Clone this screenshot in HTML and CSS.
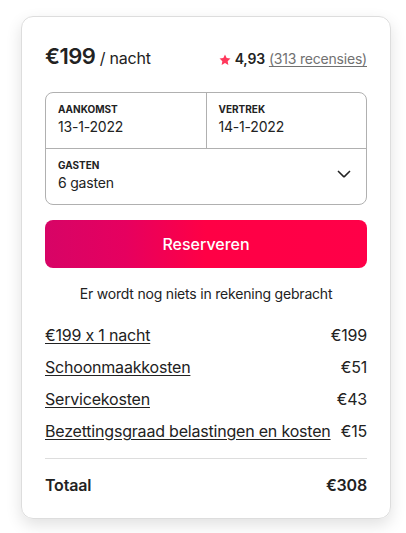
FILE: index.html
```html
<!DOCTYPE html>
<html lang="nl">
<head>
<meta charset="utf-8">
<link rel="stylesheet" href="styles.css">
</head>
<body>
<div class="card">
  <div class="head">
    <div class="price"><span class="amount">€199</span> <span class="per">/ nacht</span></div>
    <div class="rating">
      <svg class="star" viewBox="0 0 32 32" width="12" height="12"><path d="M16 1.5l4.4 9.3 10.1 1.3-7.4 7 1.9 10.1L16 24.3l-9 4.9 1.9-10.1-7.4-7 10.1-1.3z" fill="#ff385c"/></svg>
      <span class="score">4,93</span>
      <u class="reviews">(313 recensies)</u>
    </div>
  </div>
  <div class="picker">
    <div class="dates">
      <div class="cell">
        <div class="label">AANKOMST</div>
        <div class="value">13-1-2022</div>
      </div>
      <div class="cell right">
        <div class="label">VERTREK</div>
        <div class="value">14-1-2022</div>
      </div>
    </div>
    <div class="guests">
      <div>
        <div class="label">GASTEN</div>
        <div class="value">6 gasten</div>
      </div>
      <svg class="chev" viewBox="0 0 32 32" width="16" height="16"><path d="M28 12L16.7 23.3a1 1 0 0 1-1.4 0L4 12" fill="none" stroke="#222" stroke-width="3"/></svg>
    </div>
  </div>
  <button class="reserve">Reserveren</button>
  <p class="note">Er wordt nog niets in rekening gebracht</p>
  <div class="lines">
    <div class="line"><u>€199 x 1 nacht</u><span>€199</span></div>
    <div class="line"><u>Schoonmaakkosten</u><span>€51</span></div>
    <div class="line"><u>Servicekosten</u><span>€43</span></div>
    <div class="line"><u>Bezettingsgraad belastingen en kosten</u><span>€15</span></div>
  </div>
  <div class="total"><span>Totaal</span><span>€308</span></div>
</div>
</body>
</html>
```
FILE: styles.css
```css
html, body { margin: 0; padding: 0; background: #fff; }
body {
  font-family: Inter, "Noto Sans", "Liberation Sans", sans-serif;
  font-feature-settings: "calt" 0;
  letter-spacing: -0.2px;
  color: #222;
  padding: 16px 15px 14px 21px;
}
.card {
  width: 322px;
  border: 1px solid #ddd;
  border-radius: 12px;
  box-shadow: 0 6px 16px rgba(0,0,0,0.12);
  padding: 23px 23px 23px 23px;
}
.head {
  display: flex;
  justify-content: space-between;
  align-items: baseline;
  height: 26px;
  padding-top: 3px;
  margin-bottom: 23px;
}
.amount { font-size: 22px; font-weight: 600; letter-spacing: -0.5px; }
.per { font-size: 16px; }
.rating { font-size: 14px; display: flex; align-items: baseline; gap: 4px; padding-left: 4px; }
.star { align-self: center; position: relative; top: 1px; }
.score { font-weight: 600; }
.reviews { color: #717171; text-underline-offset: 2px; }
.picker {
  border: 1px solid #b0b0b0;
  border-radius: 8px;
}
.dates { display: flex; border-bottom: 1px solid #b0b0b0; }
.cell { flex: 1; padding: 10px 12px 10px 12px; height: 35px; }
.cell.right { border-left: 1px solid #b0b0b0; }
.label { font-size: 10px; font-weight: 700; letter-spacing: 0; line-height: 12px; }
.value { font-size: 14px; line-height: 20px; margin-top: 2px; }
.guests {
  display: flex; align-items: center; justify-content: space-between;
  padding: 9px 14px 10px 12px;
  height: 36px;
}
.chev { position: relative; top: -3px; }
.reserve {
  display: block;
  width: 100%;
  height: 48px;
  margin-top: 15px;
  border: none;
  border-radius: 8px;
  color: #fff;
  font-family: inherit;
  letter-spacing: 0;
  font-size: 16px;
  font-weight: 500;
  background: linear-gradient(to right, #d70466 0%, #e6005f 25%, #ff0045 50%, #ff0048 100%);
}
.note { text-align: center; font-size: 14px; margin: 17px 0 0; line-height: 18px; }
.lines { margin-top: 22px; padding-bottom: 17px; border-bottom: 1px solid #ddd; }
.line {
  display: flex; justify-content: space-between;
  font-size: 16px; line-height: 20px;
  margin-bottom: 12px;
}
.line:last-child { margin-bottom: 0; }
.line u { text-underline-offset: 2px; }
.total {
  display: flex; justify-content: space-between;
  font-size: 16px; font-weight: 600;
  padding-top: 16px;
  line-height: 20px;
}
```
